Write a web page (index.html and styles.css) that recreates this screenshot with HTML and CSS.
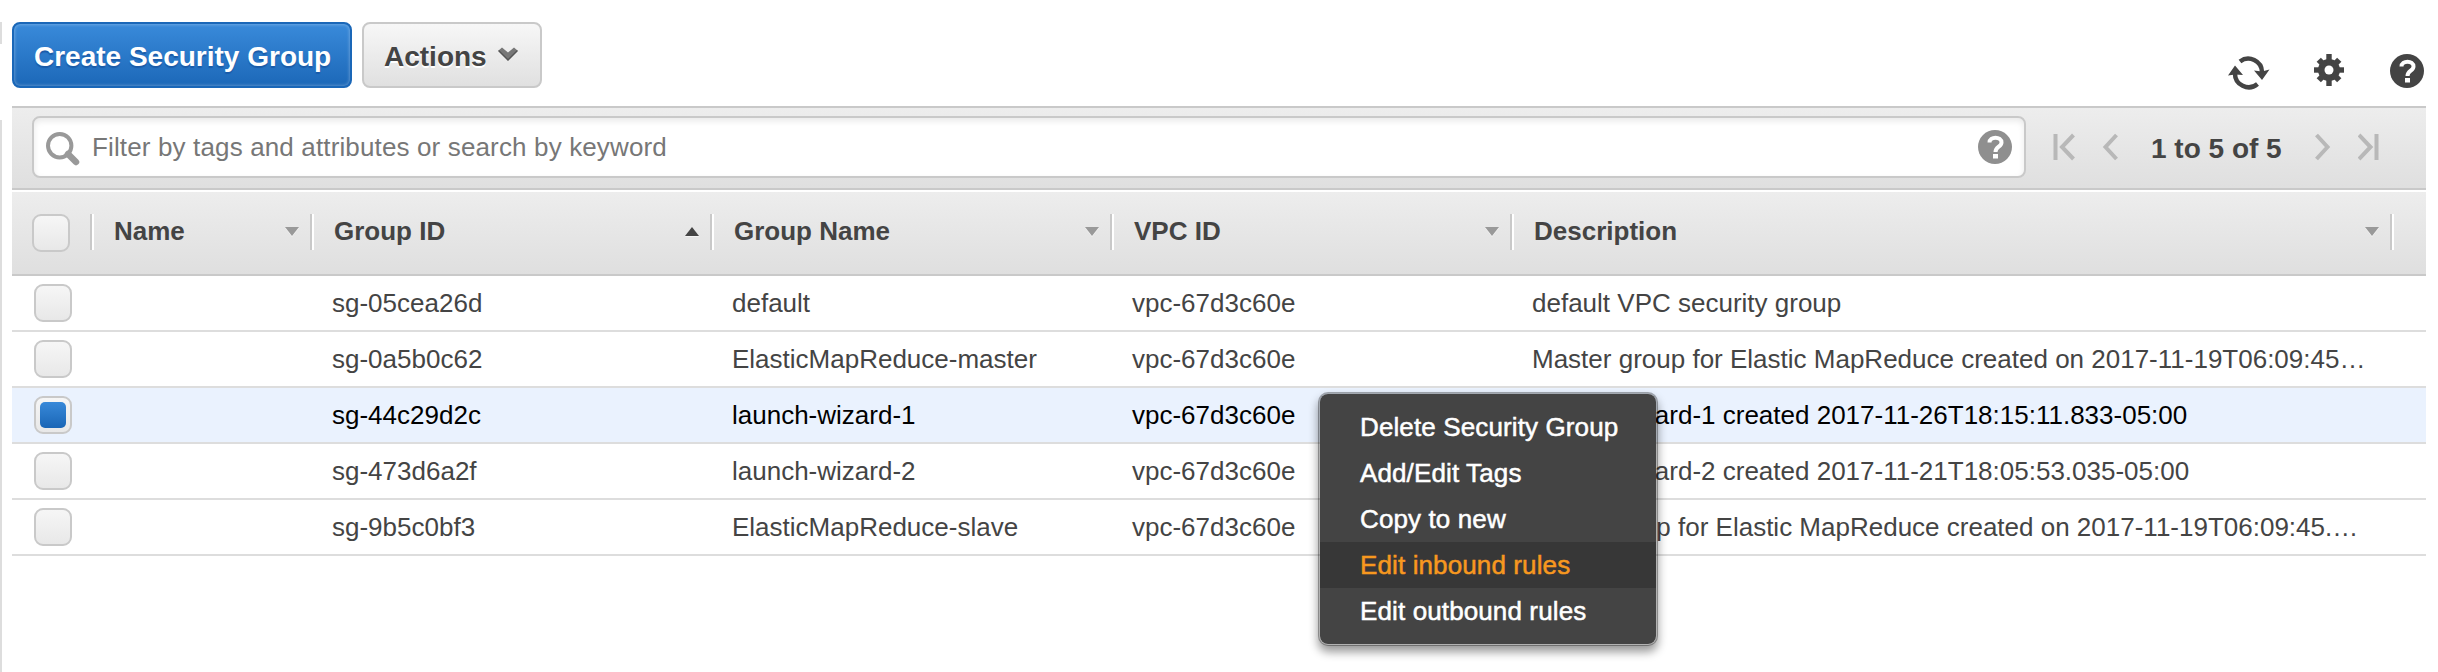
FILE: index.html
```html
<!DOCTYPE html>
<html lang="en">
<head>
<meta charset="utf-8">
<title>Security Groups</title>
<link rel="stylesheet" href="styles.css">
</head>
<body>
<div class="app">
  <aside class="rail"><div class="rail-top"></div><div class="rail-bottom"></div></aside>
  <main class="panel">
    <div class="toolbar">
      <button class="btn btn-primary">Create Security Group</button>
      <button class="btn btn-default">Actions
        <svg class="chev" width="20" height="16" viewBox="0 0 20 16"><path d="M.5 4.500L4 1.500L10 6.500L16 1.500L19.500 4.500L10 14.500Z" fill="#777"/><path d="M.5 4.500L10 14L19.500 4.500" fill="none" stroke="#555" stroke-width="1.500"/></svg>
      </button>
      <div class="tools">
        <svg width="42" height="34" viewBox="0 0 42 34" fill="none" stroke="#444" stroke-width="4.500"><path d="M12 5.500A13.700 13.700 0 0 1 34 16"/><path d="M29.500 28A13.700 13.700 0 0 1 7 17"/><path d="M26 14.500L34 15.500L41.500 13.500L34 24Z" fill="#444" stroke="none"/><path d="M0 19.500L7 18.500L15 19L7 9.500Z" fill="#444" stroke="none"/></svg>
        <svg class="gear" width="30" height="32" viewBox="-15 -16 30 32"><g fill="#444"><circle r="11"/><rect x="-2.700" y="-16" width="5.400" height="32"/><rect x="-15" y="-2.700" width="30" height="5.400"/><g transform="rotate(45)"><rect x="-3" y="-14.500" width="6" height="29"/><rect x="-14.500" y="-3" width="29" height="6"/></g></g><circle r="4.500" fill="#fff"/></svg>
        <svg width="34" height="34" viewBox="0 0 34 34"><circle cx="17" cy="17" r="17" fill="#444"/><path d="M11.500 12.500C11.500 6 23.500 6 23.500 12.500C23.500 17 17.500 16.500 17.500 22" fill="none" stroke="#fff" stroke-width="4"/><rect x="15" y="24" width="5" height="4.500" fill="#fff"/></svg>
      </div>
    </div>

    <div class="filterbar">
      <div class="search">
        <svg class="mag" width="36" height="36" viewBox="0 0 36 36" fill="none" stroke="#999"><circle cx="14.700" cy="14.700" r="11.700" stroke-width="4"/><path d="M23 23L31 31" stroke-width="6.500" stroke-linecap="round"/></svg>
        <span class="placeholder">Filter by tags and attributes or search by keyword</span>
        <svg class="help" width="34" height="34" viewBox="0 0 34 34"><circle cx="17" cy="17" r="17" fill="#8f8f8f"/><path d="M11.500 12.500C11.500 6 23.500 6 23.500 12.500C23.500 17 17.500 16.500 17.500 22" fill="none" stroke="#fff" stroke-width="4"/><rect x="15" y="24" width="5" height="4.500" fill="#fff"/></svg>
      </div>
      <div class="pager">
        <svg width="22" height="28" viewBox="0 0 22 28" fill="none" stroke="#b8b8b8" stroke-width="4"><path d="M2.500 1V27M20.500 2L9 14L20.500 26"/></svg>
        <svg class="prev" width="16" height="28" viewBox="0 0 16 28" fill="none" stroke="#b8b8b8" stroke-width="4"><path d="M14.500 2L3.500 14L14.500 26"/></svg>
        <span class="range">1 to 5 of 5</span>
        <svg width="16" height="28" viewBox="0 0 16 28" fill="none" stroke="#b8b8b8" stroke-width="4"><path d="M1.500 2L12.500 14L1.500 26"/></svg>
        <svg class="last" width="22" height="28" viewBox="0 0 22 28" fill="none" stroke="#b8b8b8" stroke-width="4"><path d="M18.500 1V27M1 2L12.500 14L1 26"/></svg>
      </div>
    </div>

    <div class="grid head">
      <div class="hc hc-check"><span class="check"></span></div>
      <div class="hc"><span>Name</span><i class="sort"></i></div>
      <div class="hc"><span>Group ID</span><i class="sort asc"></i></div>
      <div class="hc"><span>Group Name</span><i class="sort"></i></div>
      <div class="hc"><span>VPC ID</span><i class="sort"></i></div>
      <div class="hc"><span>Description</span><i class="sort"></i></div>
    </div>
    <div class="grid row"><div class="cc"><span class="check"></span></div><div></div><div>sg-05cea26d</div><div>default</div><div>vpc-67d3c60e</div><div>default VPC security group</div></div>
    <div class="grid row"><div class="cc"><span class="check"></span></div><div></div><div>sg-0a5b0c62</div><div>ElasticMapReduce-master</div><div>vpc-67d3c60e</div><div>Master group for Elastic MapReduce created on 2017-11-19T06:09:45…</div></div>
    <div class="grid row selected"><div class="cc"><span class="check on"></span></div><div></div><div>sg-44c29d2c</div><div>launch-wizard-1</div><div>vpc-67d3c60e</div><div>launch-wizard-1 created 2017-11-26T18:15:11.833-05:00</div></div>
    <div class="grid row"><div class="cc"><span class="check"></span></div><div></div><div>sg-473d6a2f</div><div>launch-wizard-2</div><div>vpc-67d3c60e</div><div>launch-wizard-2 created 2017-11-21T18:05:53.035-05:00</div></div>
    <div class="grid row"><div class="cc"><span class="check"></span></div><div></div><div>sg-9b5c0bf3</div><div>ElasticMapReduce-slave</div><div>vpc-67d3c60e</div><div>Slave group for Elastic MapReduce created on 2017-11-19T06:09:45.…</div></div>
  </main>

  <div class="menu">
    <div class="item">Delete Security Group</div>
    <div class="item">Add/Edit Tags</div>
    <div class="item">Copy to new</div>
    <div class="item active">Edit inbound rules</div>
    <div class="item">Edit outbound rules</div>
  </div>
</div>
</body>
</html>
```
FILE: styles.css
```css
* { box-sizing: border-box; }
body { margin: 0; background: #fff; color: #444; font: 26px "Liberation Sans", Arial, sans-serif; }
svg { display: block; flex: none; }
.app { position: relative; display: flex; width: 2438px; height: 672px; overflow: hidden; }

.rail { width: 2px; margin-right: 10px; padding-top: 22px; display: flex; flex-direction: column; }
.rail-top { height: 22px; background: #ddd; }
.rail-bottom { flex: 1; margin-top: 76px; background: #ddd; }
.panel { width: 2414px; }

.toolbar { display: flex; height: 106px; padding-top: 22px; align-items: flex-start; }
.btn { height: 66px; margin: 0; padding: 3px 0 0; border: 2px solid; border-radius: 8px; font: bold 28px "Liberation Sans", Arial, sans-serif; display: flex; align-items: center; }
.btn-primary { width: 340px; padding-left: 20px; color: #fff; border-color: #1a67b8; background: linear-gradient(#398ada, #1c68b8); box-shadow: inset 0 0 3px 1px rgba(255,255,255,.25); text-shadow: 0 2px 1px #1a5ba8; white-space: nowrap; }
.btn-default { width: 180px; margin-left: 10px; padding-left: 20px; gap: 11px; color: #444; border-color: #c9c9c9; background: linear-gradient(#f7f7f7, #e0e0e0); text-shadow: 0 2px 0 #fff; }
.chev { margin-top: -6px; }
.tools { display: flex; margin: 32px 2px 0 auto; align-items: flex-start; }
.tools svg:first-child { margin-top: 2px; }
.gear { margin: 0 46px 0 44px; }

.filterbar { display: flex; height: 84px; padding: 8px 0 0 20px; border-top: 2px solid #c9c9c9; border-bottom: 2px solid #c9c9c9; background: linear-gradient(#ededed, #dfdfdf); }
.search { display: flex; align-items: center; width: 1994px; height: 62px; padding: 0 12px 0 11px; border: 2px solid #c9c9c9; border-radius: 8px; background: #fff; box-shadow: inset 0 3px 6px rgba(0,0,0,.09); color: #777; }
.mag { margin-top: 4px; }
.placeholder { margin-left: 11px; flex: 1; letter-spacing: .14px; }
.pager { display: flex; align-items: center; height: 62px; padding-left: 27px; }
.prev { margin-left: 27px; }
.range { width: 134px; margin: 3px 30px 0 33px; font-size: 28px; font-weight: bold; white-space: nowrap; }
.last { margin-left: 27px; }

.grid { display: grid; grid-template-columns: 78px 220px 400px 400px 400px 880px 36px; }
.head { height: 86px; padding-top: 22px; border-top: 2px solid #fff; border-bottom: 2px solid #c9c9c9; background: linear-gradient(#ededed, #dfdfdf) padding-box; font-weight: bold; }
.hc { display: flex; height: 36px; margin: 0 -4px 0 4px; padding: 0 13px 2px 20px; align-items: center; justify-content: space-between; border-right: 2px solid #fff; box-shadow: inset -2px 0 #c9c9c9; }
.hc-check { width: 82px; margin: 0; padding: 0 0 0 20px; align-items: flex-start; }
.sort { width: 0; height: 0; border: 7.500px solid transparent; border-top: 9px solid #999; border-bottom: 0; filter: drop-shadow(0 1px 0 #f4f4f4); }
.asc { border-top: 0; border-bottom: 9px solid #444; }
.check { flex: none; display: flex; width: 38px; height: 38px; border: 2px solid #c9c9c9; border-radius: 9px; background: linear-gradient(#f6f6f6, #e8e8e8); }
.on::after { content: ""; width: 26px; height: 26px; margin: 4px; border-radius: 5px; background: linear-gradient(#3889d9, #1a66b6); }

.row { height: 56px; line-height: 54px; border-bottom: 2px solid #ddd; white-space: nowrap; }
.row > div { padding-left: 22px; }
.row > .cc { padding-top: 8px; }
.selected { background: #eaf2fe; color: #000; }

.menu { position: absolute; left: 1318px; top: 392px; width: 340px; height: 254px; padding: 10px 0; border: 2px solid rgba(0,0,0,.3); border-radius: 10px; background: #444 padding-box; box-shadow: 0 6px 10px rgba(0,0,0,.4); color: #fff; letter-spacing: .12px; -webkit-text-stroke: .5px; }
.item { height: 46px; padding-left: 40px; line-height: 47px; white-space: nowrap; }
.active { background: #373737; color: #f7981f; }
```
